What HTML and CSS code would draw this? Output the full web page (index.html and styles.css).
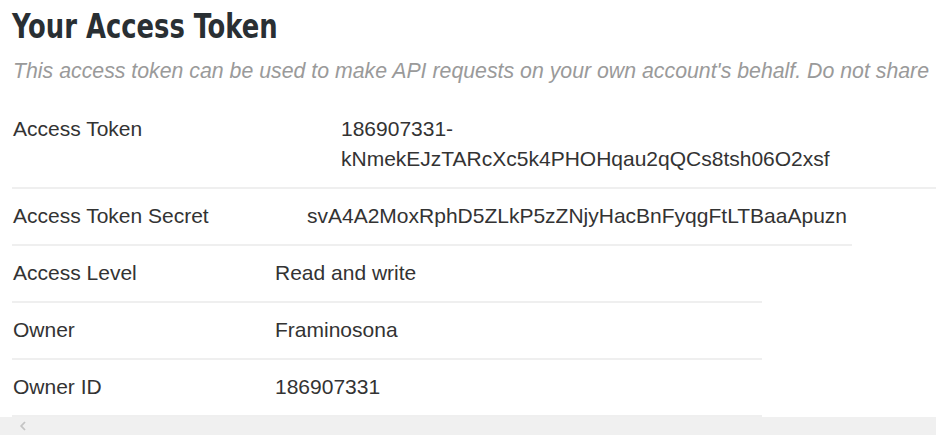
FILE: index.html
```html
<!DOCTYPE html>
<html lang="en">
<head>
<meta charset="utf-8">
<title>Your Access Token</title>
<link rel="stylesheet" href="styles.css">
</head>
<body>
<main class="page">
  <h1 class="title"><span class="title-text">Your Access Token</span></h1>
  <p class="lead">This access token can be used to make API requests on your own account's behalf. Do not share</p>
  <div class="details">
    <div class="row row-token">
      <div class="key">Access Token</div>
      <div class="val">186907331-<wbr>kNmekEJzTARcXc5k4PHOHqau2qQCs8tsh06O2xsf</div>
    </div>
    <div class="row row-secret">
      <div class="key">Access Token Secret</div>
      <div class="val">svA4A2MoxRphD5ZLkP5zZNjyHacBnFyqgFtLTBaaApuzn</div>
    </div>
    <div class="row row-meta">
      <div class="key">Access Level</div>
      <div class="val">Read and write</div>
    </div>
    <div class="row row-meta">
      <div class="key">Owner</div>
      <div class="val">Framinosona</div>
    </div>
    <div class="row row-meta">
      <div class="key">Owner ID</div>
      <div class="val">186907331</div>
    </div>
  </div>
  <div class="hscroll">
    <svg class="hscroll-arrow" width="8" height="10" viewBox="0 0 8 10" aria-hidden="true">
      <path d="M6 1 L2.2 5 L6 9" fill="none" stroke="#c4c4c4" stroke-width="1.8"/>
    </svg>
  </div>
</main>
</body>
</html>
```

FILE: styles.css
```css
html, body {
  margin: 0;
  padding: 0;
  background: #ffffff;
}

.page {
  width: 936px;
  height: 436px;
  overflow: hidden;
  font-family: "Liberation Sans", Arial, sans-serif;
  color: #333333;
}

.title {
  margin: 7px 0 0 12px;
  font-family: "Liberation Sans Narrow", "Arial Narrow", "DejaVu Sans Condensed", sans-serif;
  font-weight: bold;
  font-size: 33px;
  line-height: 40px;
  color: #292f33;
  white-space: nowrap;
}

.title-text {
  display: inline-block;
  transform: scaleX(0.87);
  transform-origin: left center;
}

.lead {
  margin: 9px 0 0 13px;
  font-size: 21.3px;
  line-height: 30px;
  font-style: italic;
  color: #9a9a9a;
  white-space: nowrap;
  overflow: hidden;
}

.details {
  margin: 16px 0 0 12px;
}

.row {
  display: grid;
  border-bottom: 2px solid #efefef;
  font-size: 21px;
  line-height: 30px;
}

.row-token {
  width: 924px;
  grid-template-columns: 329px 1fr;
}

.row-secret {
  width: 840px;
  grid-template-columns: 295px 1fr;
}

.row-meta {
  width: 750px;
  grid-template-columns: 263px 1fr;
}

.key {
  padding: 12px 0 13px 1px;
  white-space: nowrap;
}

.val {
  padding: 12px 13px 13px 0;
}

.row-secret .val {
  padding-right: 0;
  white-space: nowrap;
}

.hscroll {
  height: 18px;
  background: #f0f0f0;
  display: flex;
  align-items: center;
  padding-left: 19px;
}

.hscroll-arrow {
  display: block;
}
```
